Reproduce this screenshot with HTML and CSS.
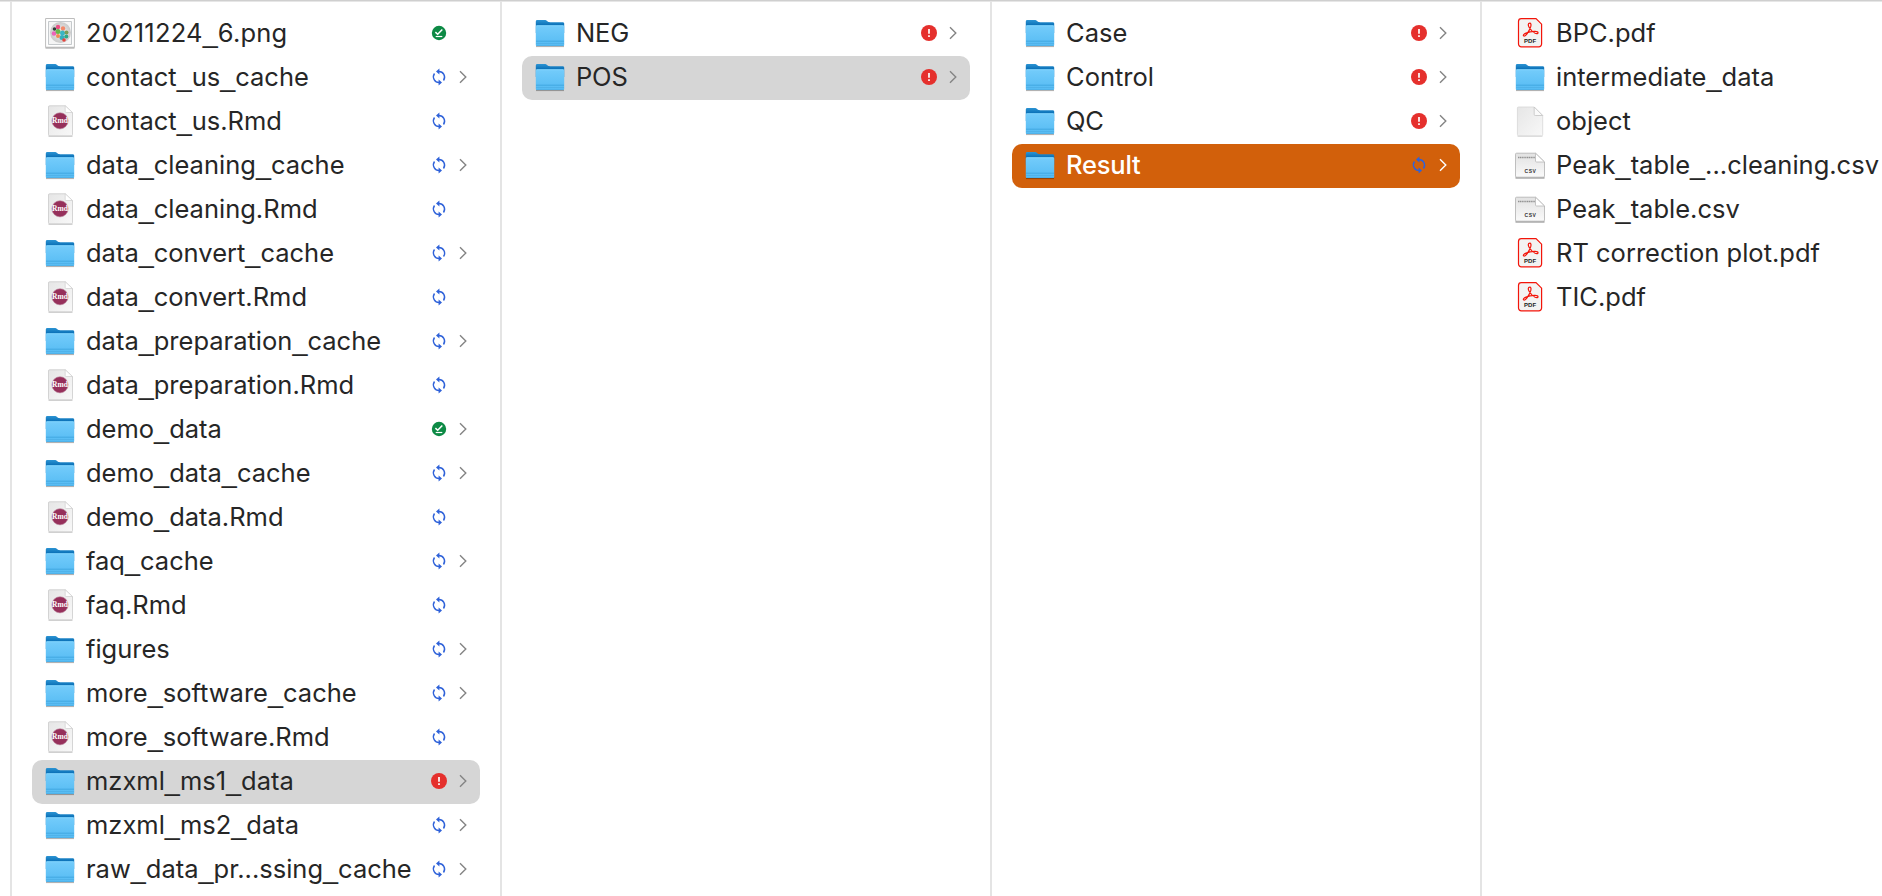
FILE: index.html
```html
<!DOCTYPE html>
<html lang="en">
<head>
<meta charset="utf-8">
<title>Files</title>
<link rel="stylesheet" href="styles.css">
</head>
<body>
<svg class="defs" aria-hidden="true">
  <defs>
    <linearGradient id="gFront" x1="0" y1="0" x2="0" y2="1"><stop offset="0" stop-color="#74ccfb"/><stop offset="1" stop-color="#55bbf3"/></linearGradient>
    <linearGradient id="gBack" x1="0" y1="0" x2="0" y2="1"><stop offset="0" stop-color="#2b93d3"/><stop offset=".35" stop-color="#0e74ba"/></linearGradient>
    <linearGradient id="gPage" x1="0" y1="0" x2="1" y2="1"><stop offset="0" stop-color="#e6e6e6"/><stop offset="1" stop-color="#f8f8f8"/></linearGradient>
    <linearGradient id="gCsv" x1="0" y1="0" x2="0" y2="1"><stop offset="0" stop-color="#e2e2e2"/><stop offset="1" stop-color="#fafafa"/></linearGradient>
    <radialGradient id="gBall"><stop offset="0" stop-color="#f4f4f4"/><stop offset="1" stop-color="#c9c9c9"/></radialGradient>
  </defs>
  <symbol id="folder" viewBox="0 -1 32 32">
    <path d="M2 28.3h28" stroke="#000" stroke-opacity=".3" stroke-width="1.6"/>
    <path d="M1.800 3.700c0-1 .5-1.600 1.500-1.600h7.200c1.300 0 2 .4 2.900 1.200.8.700 1.500.9 2.600.9h12.600c1 0 1.600.5 1.600 1.500V15H1.800z" fill="url(#gBack)"/>
    <path d="M1.800 8.800c0-1 .5-1.600 1.500-1.600h25.400c1 0 1.500.6 1.500 1.600v17.900c0 .8-.5 1.300-1.300 1.300H3.100c-.8 0-1.300-.5-1.300-1.300z" fill="url(#gFront)"/>
    <path d="M2.500 7.800h27" stroke="#8ad8fe" stroke-width=".7"/>
    <path d="M2 23.200h28" stroke="#369fd9" stroke-width=".7"/>
    <path d="M2 25.500h28M2.500 27.500h27" stroke="#4caee4" stroke-width=".7"/>
  </symbol>
  <symbol id="rmd" viewBox="0 0 32 32">
    <path d="M4.500 31.200h24" stroke="#000" stroke-opacity=".25" stroke-width="1"/>
    <path d="M5.500.8h15.700l7.300 7v21.700a1.300 1.300 0 0 1-1.300 1.300H5.800a1.300 1.300 0 0 1-1.300-1.300V1.800a1 1 0 0 1 1-1z" fill="url(#gPage)" stroke="#c4c4c4" stroke-width=".7"/>
    <path d="M21.200.8v5.700a1 1 0 0 0 1 1h6.300z" fill="#fff" stroke="#c8c8c8" stroke-width=".6"/>
    <circle cx="16" cy="15.800" r="8.100" fill="#96305b" stroke="#bf8fa5" stroke-width=".6"/>
    <text x="16" y="18.300" class="rmd-label">Rmd</text>
  </symbol>
  <symbol id="png" viewBox="0 0 32 32">
    <path d="M1.500 30.800h29" stroke="#000" stroke-opacity=".4" stroke-width="1.400"/>
    <path d="M1.600 1.500h28.800v28.700H1.600z" fill="#fff" stroke="#bdbdbd" stroke-width="1"/>
    <path d="M4.500 4.500h23v23h-23z" fill="#f5f5f5" stroke="#b7bcc0" stroke-width=".8"/>
    <circle cx="16.500" cy="15.500" r="10.500" fill="url(#gBall)"/>
    <circle cx="14" cy="10" r="2.200" fill="#ec4d83"/><circle cx="10.500" cy="12" r="1.800" fill="#303b38"/><circle cx="10" cy="16.500" r="2.300" fill="#ec63b8"/><circle cx="14" cy="14.500" r="2.500" fill="#65b84b"/><circle cx="19" cy="11.500" r="2.200" fill="#f3896a"/><circle cx="18.500" cy="16" r="2.500" fill="#38b6c4"/><circle cx="22.500" cy="15.500" r="2" fill="#7b9e56"/><circle cx="18" cy="20.500" r="2.500" fill="#35aebd"/><circle cx="14" cy="19" r="2" fill="#f08b50"/><circle cx="22.300" cy="19.500" r="2" fill="#2da886"/><circle cx="20" cy="23" r="1.800" fill="#e5453e"/>
  </symbol>
  <symbol id="doc" viewBox="0 0 32 32">
    <path d="M3.500 31.200h25" stroke="#000" stroke-opacity=".18" stroke-width="1"/>
    <path d="M4.500 2h15.700l8.500 8.500v19a1.300 1.300 0 0 1-1.300 1.300H4.700a1.300 1.300 0 0 1-1.300-1.300V3.100A1.100 1.100 0 0 1 4.500 2z" fill="url(#gPage)" stroke="#d2d2d2" stroke-width=".7"/>
    <path d="M20.200 2v7.500a1 1 0 0 0 1 1h7.500z" fill="#fafafa" stroke="#c3c3c3" stroke-width=".8"/>
  </symbol>
  <symbol id="csv" viewBox="0 0 32 32">
    <path d="M1.500 28.900h29" stroke="#000" stroke-opacity=".5" stroke-width="1.200"/>
    <path d="M2.500 4.200h19l9 8.800v14c0 .8-.4 1.200-1.200 1.200H2.700c-.8 0-1.200-.4-1.200-1.200V5.200c0-.6.4-1 1-1z" fill="url(#gCsv)" stroke="#b0b0b0" stroke-width=".8"/>
    <path d="M21.500 4.200V12a1 1 0 0 0 1 1h8z" fill="#fff" stroke="#b8b8b8" stroke-width=".8"/>
    <path d="M4 8.400h17" stroke="#929292" stroke-width="1.500" stroke-dasharray="1.300 .5"/>
    <text x="16.500" y="24.300" class="csv-label">CSV</text>
  </symbol>
  <symbol id="pdf" viewBox="0 0 32 32">
    <path d="M7.300 1.600H22l5.600 5.600v19.800a2.800 2.800 0 0 1-2.800 2.800H7.300a2.800 2.800 0 0 1-2.800-2.800V4.400a2.800 2.800 0 0 1 2.800-2.800z" fill="#f3f3f2" stroke="#f3150a" stroke-width="1.200"/>
    <path d="M15.800 6.200c-2 0-1.800 2.200-.7 4.100 1.500 2.600 3.600 4.900 6 6 2 .8 3 .3 2.900-.7-.1-1-1.700-1.300-3.600-1.200-3 .1-6 .7-8.400 1.700-2.200 1-3 2.200-2.400 2.800.7.600 2.200-.2 3.600-2.200 1.600-2.400 3.100-5.200 3.600-7.300.4-1.900.2-3.200-1-3.200z" fill="none" stroke="#f3150a" stroke-width="1.200"/>
    <text x="16.100" y="26.200" class="pdf-label">PDF</text>
  </symbol>
  <symbol id="ok" viewBox="0 0 16 16">
    <circle cx="8" cy="8" r="7.200" fill="#0d8a45"/>
    <path d="M4.400 7.100l2.300 2.200 4.600-4.900" fill="none" stroke="#fff" stroke-width="1.500"/>
    <path d="M4.700 11.500h6.600" stroke="#fff" stroke-width="1.200"/>
  </symbol>
  <symbol id="sync" viewBox="-1 -1 18 18">
    <path d="M7.500 2.500a5.700 5.700 0 0 1 5 9M8.500 13.500a5.700 5.700 0 0 1-5-9" fill="none" stroke="#2f62d9" stroke-width="1.400"/>
    <path d="M8.400-.5v6L5 2.500zM7.600 10.500v6l3.400-3z" fill="#2f62d9"/>
  </symbol>
  <symbol id="err" viewBox="0 0 16 16">
    <circle cx="8" cy="8" r="8" fill="#e5302d"/>
    <path d="M8 4v4.800M8 10.200v1.700" stroke="#fff" stroke-width="1.700"/>
  </symbol>
  <symbol id="chev" viewBox="0 0 8 14"><path d="M1 1.200l5.800 5.800L1 12.800" fill="none" stroke="currentColor" stroke-width="1.400"/></symbol>
</svg>
<main class="browser">
  <ul class="column">
    <li class="row"><svg class="icon"><use href="#png"/></svg><span class="name digits">20211224<i>_</i>6.png</span><svg class="status"><use href="#ok"/></svg><b class="chev"></b></li>
    <li class="row"><svg class="icon"><use href="#folder"/></svg><span class="name">contact<i>_</i>us<i>_</i>cache</span><svg class="status sync"><use href="#sync"/></svg><svg class="chev"><use href="#chev"/></svg></li>
    <li class="row"><svg class="icon"><use href="#rmd"/></svg><span class="name">contact<i>_</i>us.Rmd</span><svg class="status sync"><use href="#sync"/></svg><b class="chev"></b></li>
    <li class="row"><svg class="icon"><use href="#folder"/></svg><span class="name">data<i>_</i>cleaning<i>_</i>cache</span><svg class="status sync"><use href="#sync"/></svg><svg class="chev"><use href="#chev"/></svg></li>
    <li class="row"><svg class="icon"><use href="#rmd"/></svg><span class="name">data<i>_</i>cleaning.Rmd</span><svg class="status sync"><use href="#sync"/></svg><b class="chev"></b></li>
    <li class="row"><svg class="icon"><use href="#folder"/></svg><span class="name">data<i>_</i>convert<i>_</i>cache</span><svg class="status sync"><use href="#sync"/></svg><svg class="chev"><use href="#chev"/></svg></li>
    <li class="row"><svg class="icon"><use href="#rmd"/></svg><span class="name">data<i>_</i>convert.Rmd</span><svg class="status sync"><use href="#sync"/></svg><b class="chev"></b></li>
    <li class="row"><svg class="icon"><use href="#folder"/></svg><span class="name">data<i>_</i>preparation<i>_</i>cache</span><svg class="status sync"><use href="#sync"/></svg><svg class="chev"><use href="#chev"/></svg></li>
    <li class="row"><svg class="icon"><use href="#rmd"/></svg><span class="name">data<i>_</i>preparation.Rmd</span><svg class="status sync"><use href="#sync"/></svg><b class="chev"></b></li>
    <li class="row"><svg class="icon"><use href="#folder"/></svg><span class="name">demo<i>_</i>data</span><svg class="status"><use href="#ok"/></svg><svg class="chev"><use href="#chev"/></svg></li>
    <li class="row"><svg class="icon"><use href="#folder"/></svg><span class="name">demo<i>_</i>data<i>_</i>cache</span><svg class="status sync"><use href="#sync"/></svg><svg class="chev"><use href="#chev"/></svg></li>
    <li class="row"><svg class="icon"><use href="#rmd"/></svg><span class="name">demo<i>_</i>data.Rmd</span><svg class="status sync"><use href="#sync"/></svg><b class="chev"></b></li>
    <li class="row"><svg class="icon"><use href="#folder"/></svg><span class="name">faq<i>_</i>cache</span><svg class="status sync"><use href="#sync"/></svg><svg class="chev"><use href="#chev"/></svg></li>
    <li class="row"><svg class="icon"><use href="#rmd"/></svg><span class="name">faq.Rmd</span><svg class="status sync"><use href="#sync"/></svg><b class="chev"></b></li>
    <li class="row"><svg class="icon"><use href="#folder"/></svg><span class="name">figures</span><svg class="status sync"><use href="#sync"/></svg><svg class="chev"><use href="#chev"/></svg></li>
    <li class="row"><svg class="icon"><use href="#folder"/></svg><span class="name">more<i>_</i>software<i>_</i>cache</span><svg class="status sync"><use href="#sync"/></svg><svg class="chev"><use href="#chev"/></svg></li>
    <li class="row"><svg class="icon"><use href="#rmd"/></svg><span class="name">more<i>_</i>software.Rmd</span><svg class="status sync"><use href="#sync"/></svg><b class="chev"></b></li>
    <li class="row selected"><svg class="icon"><use href="#folder"/></svg><span class="name">mzxml<i>_</i>ms1<i>_</i>data</span><svg class="status"><use href="#err"/></svg><svg class="chev"><use href="#chev"/></svg></li>
    <li class="row"><svg class="icon"><use href="#folder"/></svg><span class="name">mzxml<i>_</i>ms2<i>_</i>data</span><svg class="status sync"><use href="#sync"/></svg><svg class="chev"><use href="#chev"/></svg></li>
    <li class="row"><svg class="icon"><use href="#folder"/></svg><span class="name">raw<i>_</i>data<i>_</i>pr...ssing<i>_</i>cache</span><svg class="status sync"><use href="#sync"/></svg><svg class="chev"><use href="#chev"/></svg></li>
  </ul>
  <ul class="column">
    <li class="row"><svg class="icon"><use href="#folder"/></svg><span class="name caps">NEG</span><svg class="status"><use href="#err"/></svg><svg class="chev"><use href="#chev"/></svg></li>
    <li class="row selected"><svg class="icon"><use href="#folder"/></svg><span class="name caps">POS</span><svg class="status"><use href="#err"/></svg><svg class="chev"><use href="#chev"/></svg></li>
  </ul>
  <ul class="column">
    <li class="row"><svg class="icon"><use href="#folder"/></svg><span class="name">Case</span><svg class="status"><use href="#err"/></svg><svg class="chev"><use href="#chev"/></svg></li>
    <li class="row"><svg class="icon"><use href="#folder"/></svg><span class="name">Control</span><svg class="status"><use href="#err"/></svg><svg class="chev"><use href="#chev"/></svg></li>
    <li class="row"><svg class="icon"><use href="#folder"/></svg><span class="name caps">QC</span><svg class="status"><use href="#err"/></svg><svg class="chev"><use href="#chev"/></svg></li>
    <li class="row active"><svg class="icon"><use href="#folder"/></svg><span class="name caps">Result</span><svg class="status sync"><use href="#sync"/></svg><svg class="chev"><use href="#chev"/></svg></li>
  </ul>
  <ul class="column last">
    <li class="row"><svg class="icon"><use href="#pdf"/></svg><span class="name">BPC.pdf</span></li>
    <li class="row"><svg class="icon"><use href="#folder"/></svg><span class="name">intermediate<i>_</i>data</span></li>
    <li class="row"><svg class="icon"><use href="#doc"/></svg><span class="name">object</span></li>
    <li class="row"><svg class="icon"><use href="#csv"/></svg><span class="name">Peak<i>_</i>table<i>_</i>...cleaning.csv</span></li>
    <li class="row"><svg class="icon"><use href="#csv"/></svg><span class="name">Peak<i>_</i>table.csv</span></li>
    <li class="row"><svg class="icon"><use href="#pdf"/></svg><span class="name">RT correction plot.pdf</span></li>
    <li class="row"><svg class="icon"><use href="#pdf"/></svg><span class="name">TIC.pdf</span></li>
  </ul>
</main>
</body>
</html>
```
FILE: styles.css
```css
* { box-sizing: border-box; }
body {
  margin: 0;
  background: #fff;
  color: #262626;
  font-family: Inter, "Liberation Sans", sans-serif;
  font-size: 25.5px;
  overflow: hidden;
}
.defs { display: block; width: 0; height: 0; visibility: hidden; }
.browser {
  display: grid;
  grid-template-columns: 490px 490px 490px 402px;
  height: 896px;
  padding-left: 10px;
  border-top: 1px solid #cfcfcf;
  box-shadow: inset 0 1px #e6e6e6;
}
.column {
  margin: 0;
  padding: 11px 20px 0;
  list-style: none;
  border-left: 2px solid #e4e4e4;
  min-width: 0;
}
.last { padding-right: 0; }
.row {
  display: flex;
  align-items: center;
  height: 44px;
  padding: 0 12px 2px;
  border-radius: 10px;
}
.last .row { padding-right: 0; }
.selected { background: #d6d6d6; }
.active { background: #d2600b; color: #fff; font-weight: 500; }
.icon { flex: none; width: 32px; height: 32px; margin-right: 10px; overflow: visible; }
.name { flex: 1; white-space: nowrap; letter-spacing: 0; line-height: 30px; }
.name i {
  font: 400 27px/1 "Liberation Sans", sans-serif;
  letter-spacing: 0;
}
.caps { letter-spacing: -0.2px; }
.digits { letter-spacing: 0.2px; }
.status { flex: none; width: 16px; height: 16px; margin-right: 12px; overflow: visible; }
.sync { width: 18px; height: 18px; margin-left: -1px; margin-right: 11px; }
.chev { flex: none; width: 8px; height: 14px; margin-right: 1px; color: #848484; }
.active .chev { color: #fff; }
.rmd-label { font: 700 7.5px "Liberation Serif", serif; fill: #fff; text-anchor: middle; }
.csv-label { font: 700 5px "Liberation Sans", sans-serif; letter-spacing: .5px; fill: #333; text-anchor: middle; }
.pdf-label { font: 700 6px "Liberation Sans", sans-serif; fill: #222; text-anchor: middle; }
```
